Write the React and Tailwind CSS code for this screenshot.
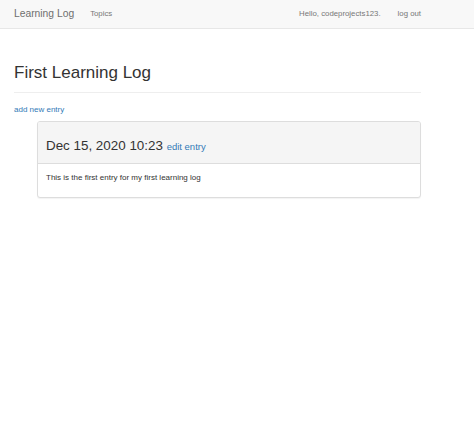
import React from 'react'

const entries = [
  {
    date: 'Dec 15, 2020 10:23',
    text: 'This is the first entry for my first learning log',
  },
]

function Navbar() {
  return (
    <nav className="h-[29px] bg-[#f8f8f8] border-b border-[#e7e7e7]">
      <div className="w-[421px] h-[28px] flex items-center justify-between pl-[14px] text-[#777]">
        <div className="flex items-center">
          <a href="#" className="text-[10.3px] leading-none text-[#6f6f6f]">Learning Log</a>
          <a href="#" className="ml-[16px] text-[7.8px] leading-none">Topics</a>
        </div>
        <div className="flex items-center text-[7.8px] leading-none">
          <span>Hello, codeprojects123.</span>
          <a href="#" className="ml-[17px]">log out</a>
        </div>
      </div>
    </nav>
  )
}

export default function App() {
  return (
    <div className="min-h-screen bg-white text-[#333] font-['Liberation_Sans',Arial,sans-serif]">
      <Navbar />

      <div className="w-[421px] pl-[14px]">
        {/* Page header */}
        <h1 className="mt-[35px] text-[17px] leading-[17px] font-normal">First Learning Log</h1>
        <div className="mt-[11px] border-t border-[#eee]" />

        <p className="mt-[12px] text-[8px] leading-[10px]">
          <a href="#" className="text-[#337ab7]">add new entry</a>
        </p>

        {/* Entries */}
        {entries.map((entry, i) => (
          <div
            key={i}
            className="mt-[6px] ml-[23px] border border-[#ddd] rounded-[3px] bg-white shadow-[0_1px_1px_rgba(0,0,0,0.05)] overflow-hidden"
          >
            <div className="h-[42px] pt-[17px] px-[8px] bg-[#f5f5f5] border-b border-[#ddd]">
              <h3 className="text-[13.4px] leading-[14px] font-normal">
                {entry.date}{' '}
                <a href="#" className="text-[9.5px] text-[#337ab7]">edit entry</a>
              </h3>
            </div>
            <div className="h-[33px] pt-[9px] px-[8px]">
              <p className="text-[8px] leading-[10px]">{entry.text}</p>
            </div>
          </div>
        ))}
      </div>
    </div>
  )
}
